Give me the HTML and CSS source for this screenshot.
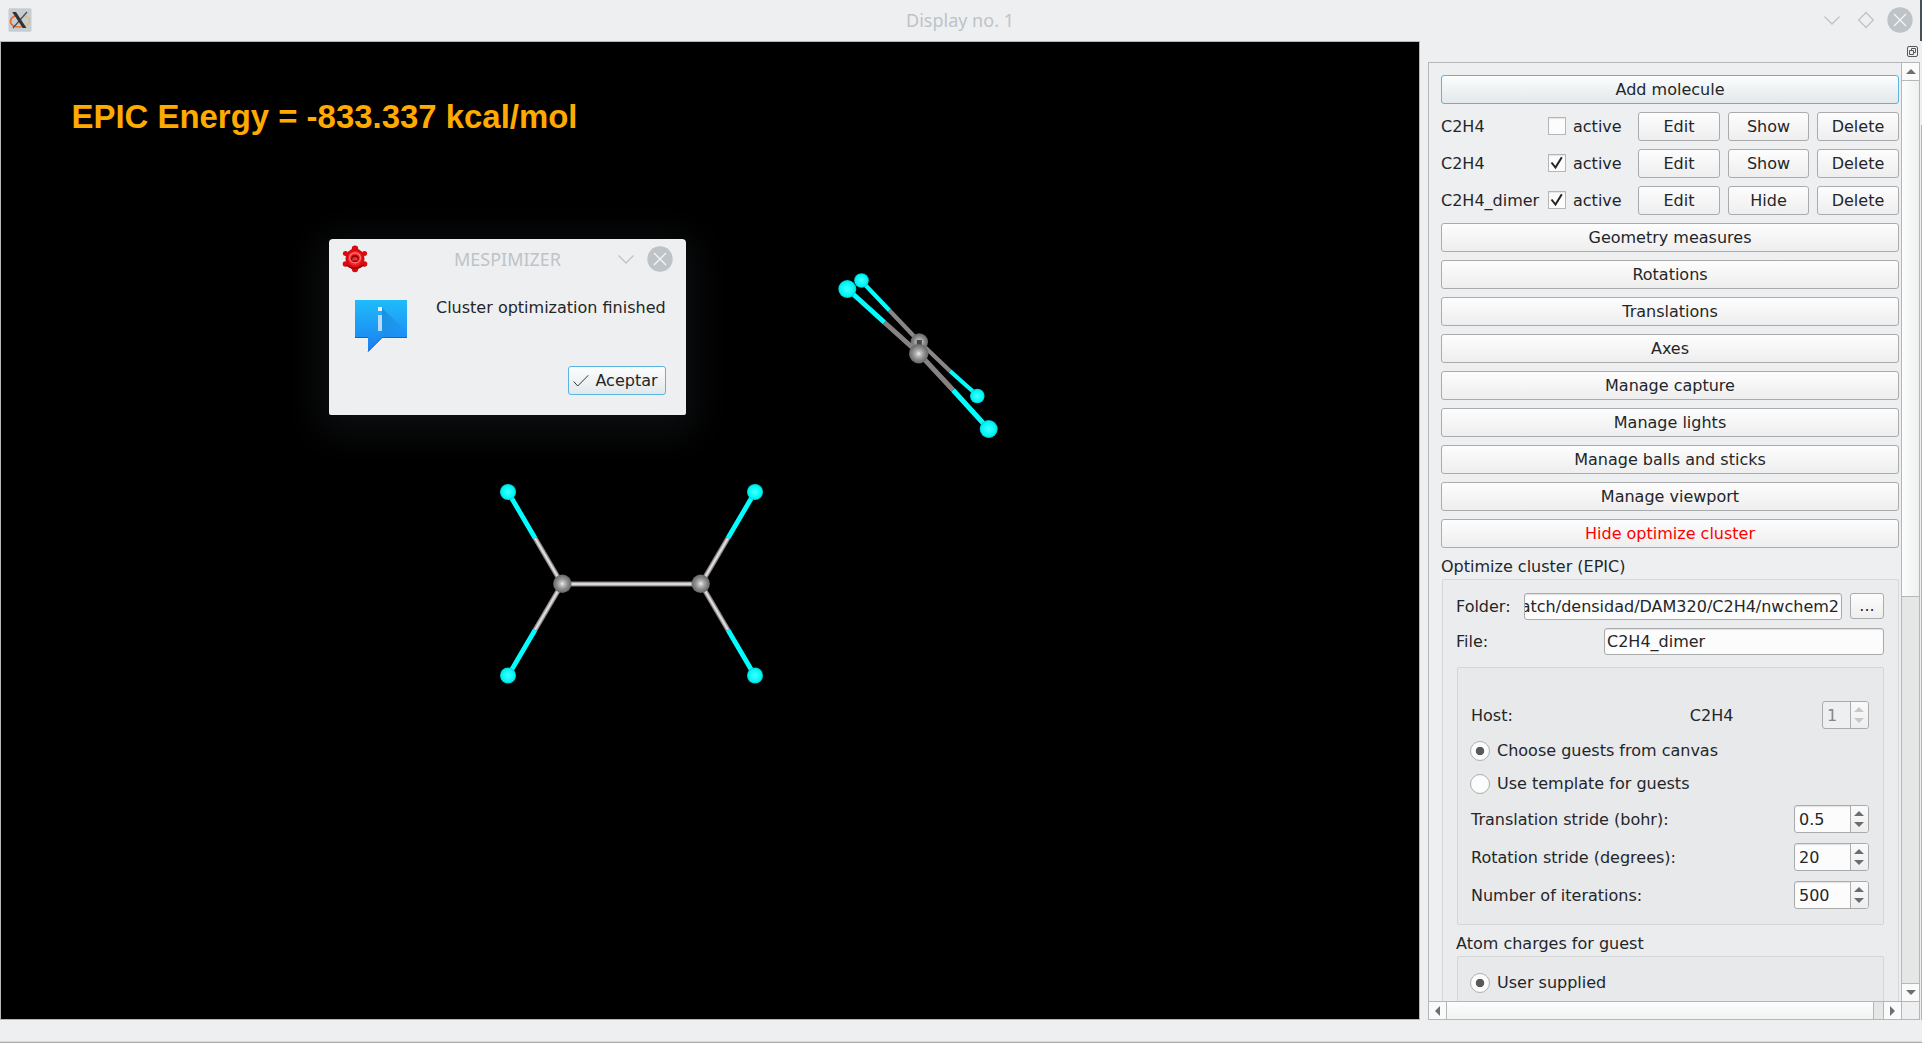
FILE: index.html
```html
<!DOCTYPE html>
<html lang="en">
<head>
<meta charset="utf-8">
<title>Display no. 1</title>
<link rel="stylesheet" href="styles.css">
</head>
<body>
<div class="window">
  <header class="titlebar">
    <svg class="app-icon" width="24" height="24" viewBox="0 0 24 24">
      <rect x=".5" y=".3" width="23" height="23.400" rx="1.500" fill="#c6cdd0"/>
      <path d="M8 7.500C.8 10 .8 16.500 7.500 18.500" fill="none" stroke="#f0642f" stroke-width="1.700"/>
      <path d="M7.500 18.500c6.500 1.200 14-1 14-5.500 0-2.300-1.500-4-4.500-5" fill="none" stroke="#efb76b" stroke-width="1.300"/>
      <path d="M7 18.400q3.500 1 7 0" fill="none" stroke="#f27a31" stroke-width="1.600"/>
      <path d="M19 4 5 20" stroke="#4b4f52" stroke-width="1.300"/>
      <path d="M4.200 4h3.800l10.500 16h-3.800z" fill="#303335"/>
    </svg>
    <h1 class="window-title">Display no. 1</h1>
    <div class="window-controls">
      <svg width="18" height="26" viewBox="0 0 18 26"><path d="M1.500 9.500 9 17l7.500-7.500" fill="none" stroke="#bdc3c7" stroke-width="1.300"/></svg>
      <svg width="18" height="26" viewBox="0 0 18 26"><path d="M9 5.500 16.300 13 9 20.500 1.700 13z" fill="none" stroke="#bdc3c7" stroke-width="1.300"/></svg>
      <svg width="26" height="26" viewBox="0 0 26 26"><circle cx="13" cy="13" r="12.700" fill="#bdc3c7"/><path d="m7 7 12 12M19 7 7 19" stroke="#f4f5f6" stroke-width="1.400"/></svg>
    </div>
    <span class="desktop-edge"></span>
  </header>
  <main class="workspace">
    <section class="canvas">
      <svg class="scene" width="1418" height="977" viewBox="1 42 1418 977">
        <defs>
          <radialGradient id="h"><stop offset="0" stop-color="#48ffff"/><stop offset=".5" stop-color="#12fbfb"/><stop offset=".8" stop-color="#00f4f4"/><stop offset="1" stop-color="#00c6c6"/></radialGradient>
          <radialGradient id="c"><stop offset="0" stop-color="#f0f0f0"/><stop offset=".25" stop-color="#bcbcbc"/><stop offset=".6" stop-color="#8d8d8d"/><stop offset="1" stop-color="#666"/></radialGradient>
        </defs>
        <text class="energy" x="71.500" y="128" textLength="506" lengthAdjust="spacingAndGlyphs">EPIC Energy = -833.337 kcal/mol</text>
        <g fill="none">
          <path d="M535 538 562 584H701L728 538M535 630 562 584M701 584 728 630" stroke="#858181" stroke-width="5"/>
          <path d="M535 538 562 584H701L728 538M535 630 562 584M701 584 728 630" stroke="#c4c0c0" stroke-width="2.800"/>
          <path d="M535 538 562 584H701L728 538M535 630 562 584M701 584 728 630" stroke="#e4e2e2" stroke-width="1.300"/>
          <path d="M508 492 535 538M508 676 535 630M755 492 728 538M755 676 728 630" stroke="#0ff" stroke-width="4.800"/>
          <path d="M889.500 310.500 919 341.500 950 371" stroke="#8b8787" stroke-width="4.200"/>
          <path d="M861.500 281 889.500 310.500M950 371 977.500 395.500" stroke="#0ff" stroke-width="4.200"/>
        </g>
        <g fill="url(#h)">
          <circle cx="508" cy="492" r="8"/><circle cx="755" cy="492" r="8"/>
          <circle cx="508" cy="675.500" r="8"/><circle cx="755" cy="675.500" r="8"/>
          <circle cx="861.500" cy="280.500" r="7.300"/><circle cx="977.300" cy="396" r="7.300"/>
        </g>
        <g fill="url(#c)"><circle cx="562.300" cy="583.700" r="9.200"/><circle cx="700.700" cy="583.700" r="9.200"/><circle cx="919.300" cy="342" r="8.700"/></g>
        <path d="M919.300 340v8" stroke="#484646" stroke-width="5"/>
        <path d="M884.500 322.500 919 353.500 953 390" fill="none" stroke="#878383" stroke-width="5"/>
        <path d="M847.500 289 884.500 322.500M953 390 988.500 429" stroke="#0ff" stroke-width="5"/>
        <circle cx="918.700" cy="353.700" r="9.700" fill="url(#c)"/>
        <circle cx="847.300" cy="289" r="9" fill="url(#h)"/><circle cx="988.700" cy="429" r="9" fill="url(#h)"/>
      </svg>
      <div class="dialog" role="dialog">
        <div class="dialog-titlebar">
          <svg width="26" height="28" viewBox="0 0 26 28">
            <g fill="#d90b0e"><circle cx="13" cy="3.700" r="3.200"/><circle cx="13" cy="24" r="3.200"/><circle cx="3.500" cy="8.500" r="2.600"/><circle cx="22.500" cy="8.500" r="2.600"/><circle cx="3.500" cy="19" r="2.800"/><circle cx="22.500" cy="19" r="2.800"/><ellipse cx="13" cy="14" rx="9.500" ry="10.500"/></g>
            <ellipse cx="13" cy="13.500" rx="7" ry="7.500" fill="#f12529"/>
            <ellipse cx="13" cy="12.800" rx="5.500" ry="5" fill="none" stroke="#ff7777" stroke-width="1.200"/>
            <ellipse cx="13" cy="13.500" rx="3.800" ry="3.500" fill="#8e0003"/><path d="M10 15.500q0-3.500 3-3.500t3 3.500z" fill="#eb3337"/>
            <path d="M4 20q9 7 18 0" fill="none" stroke="#8e0507" stroke-width="1.300"/>
          </svg>
          <h2 class="dialog-title">MESPIMIZER</h2>
          <div class="dialog-controls">
            <svg width="18" height="26" viewBox="0 0 18 26"><path d="M1.500 9.500 9 17l7.500-7.500" fill="none" stroke="#bdc3c7" stroke-width="1.300"/></svg>
            <svg width="26" height="26" viewBox="0 0 26 26"><circle cx="13" cy="13" r="12.700" fill="#bdc3c7"/><path d="m7 7 12 12M19 7 7 19" stroke="#f4f5f6" stroke-width="1.400"/></svg>
          </div>
        </div>
        <div class="dialog-body">
          <svg width="52" height="52" viewBox="0 0 52 52">
            <defs><linearGradient id="b" x2="0" y2="1"><stop stop-color="#20bcfa"/><stop offset="1" stop-color="#1b7cf1"/></linearGradient><linearGradient id="s" x2="1" y2="1"><stop stop-color="#1682cc" stop-opacity=".7"/><stop offset="1" stop-color="#1e90f2" stop-opacity=".1"/></linearGradient></defs>
            <path d="M0 0h52v38H27L13 52V38H0z" fill="url(#b)"/>
            <path d="M27 8 52 32v6H32l-5-7z" fill="url(#s)"/>
            <path d="M0 37.500h13M27 37.500h25M27 37.500 13 51.500" stroke="#1565c8" fill="none"/>
            <path d="M23 7h4v4h-4z" fill="#e0f2fe"/><path d="M23 15h4v16h-4z" fill="#b9dcfa"/>
          </svg>
          <p class="dialog-message">Cluster optimization finished</p>
        </div>
        <button class="btn primary accept"><svg width="16" height="14" viewBox="0 0 16 14"><path d="m.7 7.500 4 4.500L15.300 1.300" fill="none" stroke="#31363b" stroke-width="1"/></svg>Aceptar</button>
      </div>
    </section>
    <aside class="dock">
      <div class="dock-title"><svg width="11" height="11" viewBox="0 0 11 11" fill="none" stroke="#54585b"><rect x=".5" y=".5" width="10" height="10" rx="1.500"/><path d="M4.500 4V2.500h4v4H7M2.500 4.500h4v4h-4z"/></svg></div>
      <div class="panel">
        <div class="viewport">
          <button class="btn primary">Add molecule</button>
          <div class="molecule"><span>C2H4</span><i class="check"></i><span>active</span><div class="actions"><button class="btn">Edit</button><button class="btn">Show</button><button class="btn">Delete</button></div></div>
          <div class="molecule"><span>C2H4</span><i class="check"><svg width="16" height="16" viewBox="0 0 16 16"><path d="M2.500 7.500 6.500 12.500 12.800 2.300" fill="none" stroke="#222" stroke-width="2"/></svg></i><span>active</span><div class="actions"><button class="btn">Edit</button><button class="btn">Show</button><button class="btn">Delete</button></div></div>
          <div class="molecule"><span>C2H4_dimer</span><i class="check"><svg width="16" height="16" viewBox="0 0 16 16"><path d="M2.500 7.500 6.500 12.500 12.800 2.300" fill="none" stroke="#222" stroke-width="2"/></svg></i><span>active</span><div class="actions"><button class="btn">Edit</button><button class="btn">Hide</button><button class="btn">Delete</button></div></div>
          <button class="btn">Geometry measures</button>
          <button class="btn">Rotations</button>
          <button class="btn">Translations</button>
          <button class="btn">Axes</button>
          <button class="btn">Manage capture</button>
          <button class="btn">Manage lights</button>
          <button class="btn">Manage balls and sticks</button>
          <button class="btn">Manage viewport</button>
          <button class="btn alert">Hide optimize cluster</button>
          <div class="group-label">Optimize cluster (EPIC)</div>
          <div class="group">
            <div class="row folder"><span>Folder:</span><div class="field"><span>atch/densidad/DAM320/C2H4/nwchem2</span></div><button class="btn browse">...</button></div>
            <div class="row file"><span>File:</span><div class="field">C2H4_dimer</div></div>
            <div class="subgroup settings">
              <div class="row host"><span>Host:</span><span class="host-name">C2H4</span><div class="spin small disabled"><span>1</span><i></i></div></div>
              <div class="radio on">Choose guests from canvas</div>
              <div class="radio">Use template for guests</div>
              <div class="row stride"><span>Translation stride (bohr):</span><div class="spin"><span>0.5</span><i></i></div></div>
              <div class="row stride"><span>Rotation stride (degrees):</span><div class="spin"><span>20</span><i></i></div></div>
              <div class="row stride"><span>Number of iterations:</span><div class="spin"><span>500</span><i></i></div></div>
            </div>
            <div class="group-label inner">Atom charges for guest</div>
            <div class="subgroup charges"><div class="radio on">User supplied</div></div>
          </div>
        </div>
        <div class="vbar"><div class="arrow up"></div><div class="thumb"></div><div class="groove"></div><div class="arrow down"></div></div>
        <div class="hbar"><div class="arrow left"></div><div class="thumb"></div><div class="groove"></div><div class="arrow right"></div></div>
        <div class="corner"></div>
      </div>
    </aside>
    <div class="frame-edge"></div>
  </main>
  <footer class="statusbar"></footer>
</div>
</body>
</html>
```
FILE: styles.css
```css
* { box-sizing: border-box; }
body { margin: 0; background: #eeeff1; color: #232629; font: 16px/20px "DejaVu Sans", sans-serif; overflow: hidden; }
h1, h2, p { margin: 0; font-weight: normal; }
svg { display: block; flex: none; }
.window { width: 1922px; height: 1043px; display: flex; flex-direction: column; }

.titlebar { height: 41px; flex: none; display: grid; grid-template-columns: 140px 1fr 140px 2px; align-items: center; }
.app-icon { margin: 0 0 1px 8px; }
.window-title, .dialog-title { font: 18px/24px "Noto Sans", sans-serif; color: #bdc3c7; text-align: center; }
.window-title { margin-bottom: 1px; }
.window-controls { display: flex; gap: 16px; justify-content: flex-end; padding: 0 7px 1px 0; }
.window-controls svg:last-child { margin-left: -4px; }
.desktop-edge { height: 41px; background: #475057; }

.workspace { height: 979px; flex: none; display: flex; }
.canvas { width: 1420px; position: relative; background: #000; border: 1px solid #b4b6b7; }
.scene { width: 1418px; height: 977px; }
.energy { font: bold 33.500px "Liberation Sans", Arial, sans-serif; fill: #ffaa00; }

.dialog { position: absolute; left: 328px; top: 197px; width: 357px; height: 176px; background: #eeeff1; border-radius: 4px 4px 2px 2px; box-shadow: 0 8px 38px 10px rgba(60, 68, 76, .22); display: flex; flex-direction: column; align-items: flex-end; }
.dialog-titlebar { width: 100%; height: 40px; flex: none; display: grid; grid-template-columns: 80px 1fr 80px; align-items: center; padding: 0 13px; }
.dialog-controls { display: flex; gap: 12px; justify-content: flex-end; }
.dialog-body { width: 100%; height: 87px; flex: none; display: flex; padding: 21px 0 0 26px; gap: 29px; }
.dialog-message { margin-top: -2px; white-space: nowrap; }

.btn { height: 29px; padding: 0; border: 1px solid #a9abac; border-radius: 3px; background: linear-gradient(#fdfdfd, #eeeeee); color: #232629; font: inherit; display: flex; align-items: center; justify-content: center; }
.primary { border-color: #5ab3e0; background: linear-gradient(#fcfdfd, #e2e8eb); }
.alert { color: #f00; }
.accept { width: 98px; margin-right: 20px; padding-right: 3px; gap: 6px; }

.dock { width: 500px; padding-left: 8px; display: flex; flex-direction: column; }
.dock-title { height: 21px; flex: none; display: flex; justify-content: flex-end; padding: 5px 2px 0 0; }
.panel { height: 958px; border: 1px solid #b4b6b7; display: grid; grid-template-columns: 472px 18px; grid-template-rows: 938px 18px; }
.viewport { padding: 12px 2px 0 12px; display: flex; flex-direction: column; gap: 8px; overflow: hidden; }
.viewport > * { flex: none; }
.molecule { height: 29px; display: grid; grid-template-columns: 107px 25px 65px 261px; align-items: center; }
.actions { display: grid; grid-template-columns: 82px 81px 82px; gap: 8px; }
.check { width: 18px; height: 18px; margin-bottom: 1px; border: 1px solid #b4b6b7; background: #fcfcfc; box-shadow: inset 0 1px 1px #e4e4e4; }

.group-label { height: 20px; margin: 1px 0 -6px; }
.group { height: 440px; border: 1px solid #d5d7d8; border-bottom: 0; border-radius: 2px; background: #ebecee; margin-left: 1px; padding: 13px 14px 0; }
.row { display: flex; align-items: center; justify-content: space-between; white-space: nowrap; }
.row > span:first-child { margin-left: -1px; }
.field { height: 27px; border: 1px solid #a9abac; border-radius: 3px; background: #fcfcfc; line-height: 25px; padding: 0 2px; box-shadow: inset 0 1px 1px #e2e2e2; }
.folder { height: 27px; }
.folder .field { width: 318px; margin-left: auto; display: flex; justify-content: flex-end; overflow: hidden; padding: 0 2px 0 0; }
.browse { width: 34px; height: 26px; margin: 0 0 1px 8px; }
.file { margin-top: 8px; height: 27px; }
.file .field { width: 280px; }
.subgroup { border: 1px solid #d3d5d6; border-radius: 2px; background: #e8e9eb; padding: 0 14px; }
.settings { height: 258px; margin-top: 12px; padding-top: 33px; }
.host { height: 28px; }
.host > span { padding-top: 1px; }
.host-name { margin-left: 177px; margin-right: auto; }
.spin { width: 75px; height: 28px; border: 1px solid #a9abac; border-radius: 3px; background: #fcfcfc; display: flex; line-height: 27px; box-shadow: inset 0 1px 1px #e2e2e2; }
.spin span { flex: 1; padding-left: 4px; }
.spin i { width: 18px; border-left: 1px solid #a9abac; border-radius: 0 2px 2px 0; background: linear-gradient(#fafafa, #eee); display: flex; flex-direction: column; align-items: center; justify-content: center; gap: 6px; padding-right: 1px; color: #6b6e70; }
.spin i::before, .spin i::after { content: ""; border: 5px solid transparent; border-top-width: 0; border-bottom: 5px solid currentColor; }
.spin i::after { border-bottom: 0; border-top: 5px solid currentColor; }
.small { width: 47px; }
.disabled { background: #eeeff0; color: #858789; box-shadow: none; }
.disabled i { color: #c5c7c8; }
.radio { height: 18px; line-height: 18px; display: flex; align-items: center; gap: 7px; margin: 15px 0 0 -2px; padding-top: 1px; }
.radio::before { content: ""; flex: none; width: 18px; height: 18px; border: 1px solid #adafb0; border-radius: 50%; background: #fcfcfc; }
.on::before { background: radial-gradient(circle, #58595b 0 3.900px, #fcfcfc 4.600px); }
.host + .radio { margin-top: 12px; }
.stride { height: 28px; margin-top: 10px; }
.stride > span { padding-top: 1px; }
.radio + .stride { margin-top: 13px; }
.inner { margin: 9px 0 2px -1px; }
.charges { height: 70px; padding-top: 16px; }
.charges .radio { margin-top: 0; }

.vbar { display: flex; flex-direction: column; border-left: 1px solid #b4b6b7; }
.vbar .thumb { height: 516px; background: linear-gradient(90deg, #fdfdfd, #eeefef); border-bottom: 1px solid #b4b6b7; }
.groove { flex: 1; background: #e5e7e6; }
.arrow { width: 17px; height: 18px; flex: none; background: #fafafa; display: flex; align-items: center; justify-content: center; }
.arrow::before { content: ""; border: 5px solid transparent; }
.up { border-bottom: 1px solid #b4b6b7; }
.up::before { border-top: 0; border-bottom-color: #6b6e70; }
.down { border-top: 1px solid #b4b6b7; }
.down::before { border-bottom: 0; border-top-color: #6b6e70; }
.hbar { display: flex; border-top: 1px solid #b4b6b7; }
.hbar .thumb { width: 427px; background: linear-gradient(#fdfdfd, #f1f2f2); border-right: 1px solid #b4b6b7; }
.hbar .arrow { width: 18px; height: 17px; }
.left { border-right: 1px solid #b4b6b7; }
.left::before { border-left: 0; border-right-color: #6b6e70; }
.right { border-left: 1px solid #b4b6b7; }
.right::before { border-right: 0; border-left-color: #6b6e70; }
.corner { border: 1px solid #b4b6b7; border-width: 1px 0 0 1px; }
.frame-edge { width: 1px; margin: 84px 0 0 1px; background: #b4b6b7; }
.statusbar { flex: 1; border-bottom: 1px solid #a9abac; box-shadow: inset 0 -1px #d8dadb; }
```
